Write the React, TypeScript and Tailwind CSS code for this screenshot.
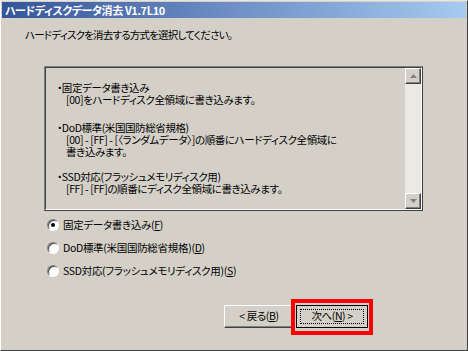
const jp = "font-['Noto_Sans_CJK_JP','Noto_Sans',sans-serif] [font-feature-settings:'palt']";

function Radio({ checked, label, hot }: { checked?: boolean; label: string; hot: string }) {
  return (
    <div className="flex h-[23px] items-center">
      <span className="relative flex h-[12px] w-[12px] items-center justify-center rounded-full border border-t-[#808080] border-l-[#808080] border-r-white border-b-white bg-white shadow-[inset_1px_1px_0_#404040]">
        {checked && <span className="h-[4px] w-[4px] rounded-full bg-black" />}
      </span>
      <span className="ml-[4px] text-[10.5px] leading-[14px] tracking-[-0.3px] text-black">
        {label}(<span className="underline">{hot}</span>)
      </span>
    </div>
  );
}

function ScrollButton({ up }: { up?: boolean }) {
  return (
    <div className="flex h-[16px] w-[16px] items-center justify-center border border-t-white border-l-white border-r-[#404040] border-b-[#404040] bg-[#d4d0c8] shadow-[inset_-1px_-1px_0_#808080]">
      <svg width="7" height="4" viewBox="0 0 7 4">
        {up ? <path d="M3.5 0 L7 4 L0 4 Z" fill="#808080" /> : <path d="M0 0 L7 0 L3.5 4 Z" fill="#808080" />}
      </svg>
    </div>
  );
}

export default function App() {
  return (
    <div className={`h-[351px] w-[468px] overflow-hidden bg-[#d4d0c8] ${jp}`}>
      <div className="flex h-full w-full flex-col border border-t-[#e8e6e1] border-l-white border-r-[#404040] border-b-[#404040] p-[1px]">
        <div className="flex h-[16px] items-center bg-gradient-to-r from-[#35559a] via-[#6f8fc6] to-[#a6caf0] pl-[3px] text-[11px] font-bold leading-none tracking-[-0.4px] text-white">
          ハードディスクデータ消去 V1.7L10
        </div>

        <div className="ml-[23px] mt-[9px] text-[10.5px] leading-[16px] tracking-[-0.8px] text-black">
          ハードディスクを消去する方式を選択してください。
        </div>

        <div className="ml-[42px] mt-[23px] flex h-[145px] w-[379px] border border-t-[#808080] border-l-[#808080] border-r-[#404040] border-b-[#404040]">
          <div className="flex flex-1 border border-t-[#404040] border-l-[#404040] border-r-white border-b-white">
            <div className="flex-1 pl-[11px] pt-[14px] text-[10.5px] leading-[12px] tracking-[-0.4px] text-black">
              <div>・固定データ書き込み</div>
              <div className="pl-[9px]">[00]をハードディスク全領域に書き込みます。</div>
              <div className="mt-[16px]">・DoD標準(米国国防総省規格)</div>
              <div className="pl-[9px]">[00] - [FF] - [〈ランダムデータ〉]の順番にハードディスク全領域に</div>
              <div className="pl-[9px]">書き込みます。</div>
              <div className="mt-[13px]">・SSD対応(フラッシュメモリディスク用)</div>
              <div className="pl-[9px]">[FF] - [FF]の順番にディスク全領域に書き込みます。</div>
            </div>
            <div className="flex w-[16px] flex-col justify-between bg-[#ebe9e4]">
              <ScrollButton up />
              <ScrollButton />
            </div>
          </div>
        </div>

        <div className="ml-[45px] mt-[2px] flex flex-col">
          <Radio checked label="固定データ書き込み" hot="F" />
          <Radio label="DoD標準(米国国防総省規格)" hot="D" />
          <Radio label="SSD対応(フラッシュメモリディスク用)" hot="S" />
        </div>

        <div className="ml-[222px] mt-[23px] flex items-start gap-[2px]">
          <button className="flex h-[23px] w-[70px] items-center justify-center border border-t-white border-l-white border-r-[#404040] border-b-[#404040] bg-[#d4d0c8] text-[10.5px] leading-none tracking-[-0.4px] text-black shadow-[inset_-1px_-1px_0_#808080]">
            &lt; 戻る(<span className="underline">B</span>)
          </button>
          <div className="relative">
            <button className="flex h-[23px] w-[72px] items-center justify-center border border-black bg-[#d4d0c8] p-[3px] text-[10.5px] leading-none tracking-[-0.4px] text-black">
              <span className="flex h-full w-full items-center justify-center border border-dotted border-black">
                次へ(<span className="underline">N</span>) &gt;
              </span>
            </button>
            <div className="pointer-events-none absolute -left-[5px] -right-[5px] -top-[6px] -bottom-[7px] border-[4px] border-[#ff0000]" />
          </div>
        </div>
      </div>
    </div>
  );
}
